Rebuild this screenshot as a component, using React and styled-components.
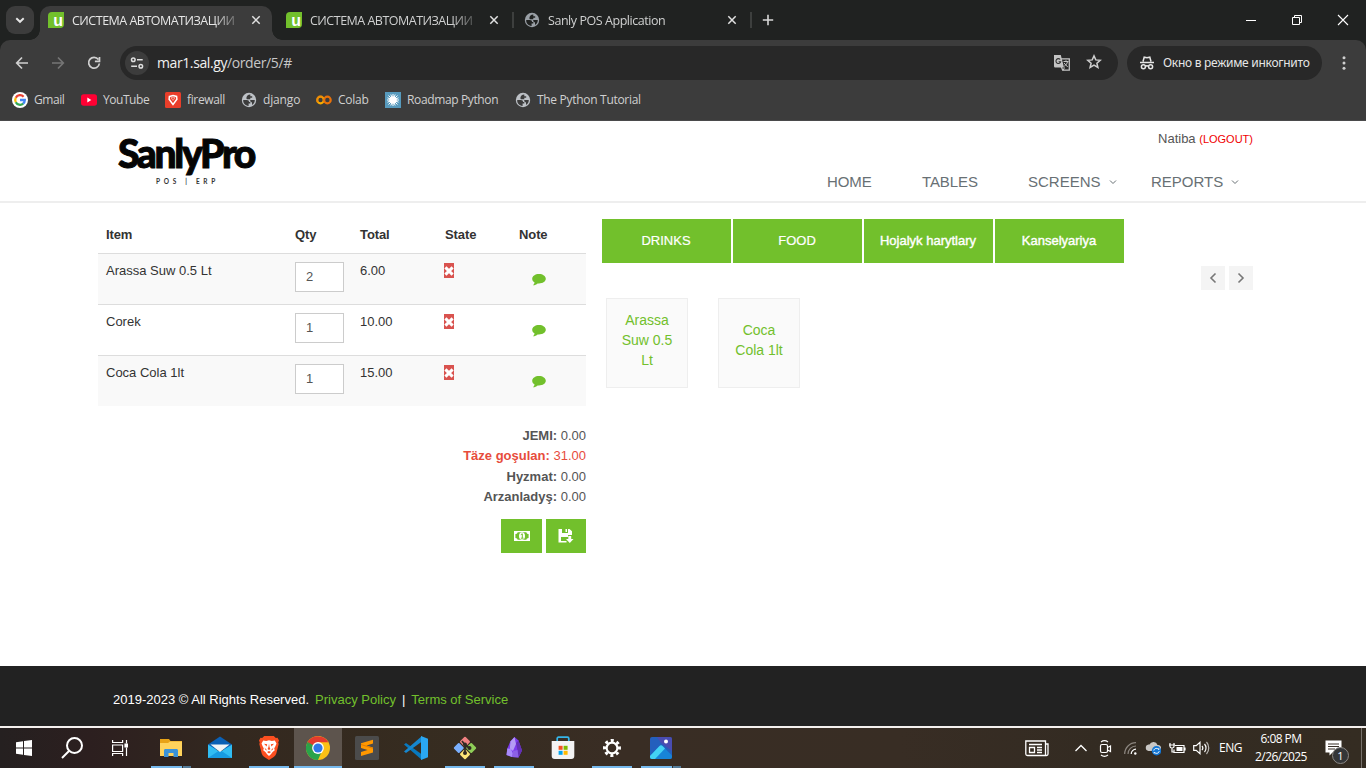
import React from "react";
import styled, { createGlobalStyle } from "styled-components";

const Global = createGlobalStyle`
  * { box-sizing: border-box; }
  body { margin: 0; background: #fff; overflow: hidden; font-family: "Liberation Sans", Arial, sans-serif; }
  svg { display: block; flex: none; }
  a { text-decoration: none; color: inherit; }
`;

const Screen = styled.div`
  width: 1366px;
  height: 768px;
  display: flex;
  flex-direction: column;
  overflow: hidden;
`;

/* ---------- browser ---------- */
const ui = `"Open Sans", "Noto Sans", sans-serif`;

const TabStrip = styled.div`
  height: 40px;
  flex: none;
  background: #202221;
  display: flex;
  align-items: flex-end;
  padding-left: 6px;
  color: #e3e3e3;
`;
const TabSearch = styled.div`
  width: 28px;
  height: 28px;
  border-radius: 9px;
  background: #3c3c3c;
  margin: 0 6px 6px 0;
  display: grid;
  place-items: center;
`;
const Tab = styled.div`
  position: relative;
  width: 232px;
  height: 34px;
  margin-right: 6px;
  padding: 0 9px 6px 8px;
  display: flex;
  align-items: center;
  border-radius: 10px 10px 0 0;
  background: ${(p) => (p.$active ? "#3c3c3c" : "transparent")};
  color: ${(p) => (p.$active ? "#e6e6e6" : "#cfd0d0")};
  &::before, &::after {
    content: "";
    display: ${(p) => (p.$active ? "block" : "none")};
    position: absolute;
    bottom: 0;
    width: 10px;
    height: 10px;
  }
  &::before { left: -10px; background: radial-gradient(circle at 0 0, transparent 9.5px, #3c3c3c 10px); }
  &::after { right: -10px; background: radial-gradient(circle at 100% 0, transparent 9.5px, #3c3c3c 10px); }
`;
const TabTitle = styled.span`
  font: 12.5px/20px ${ui};
  letter-spacing: ${(p) => p.$ls || 0}px;
  width: 166px;
  margin: 1px 11px 0 8px;
  white-space: nowrap;
  -webkit-mask-image: linear-gradient(90deg, #000 142px, rgba(0, 0, 0, 0.2) 166px);
`;
const TabDivider = styled.i`
  width: 2px;
  height: 16px;
  background: #3d3f3e;
  margin: 0 2px 12px -4px;
`;
const NewTab = styled.div`
  width: 28px;
  height: 28px;
  margin: 0 0 6px 0;
  display: grid;
  place-items: center;
`;
const WindowButtons = styled.div`
  margin-left: auto;
  height: 40px;
  display: flex;
  svg { width: 46px; height: 40px; }
`;
const Favicon = styled.span`
  width: 16px;
  height: 16px;
  flex: none;
  background: #72c02c;
  border-radius: 4px 0 4px 0;
  color: #fff;
  font: bold 16px/17px "Liberation Sans", sans-serif;
  text-align: right;
  padding-right: 1px;
`;
const Chrome = styled.div`
  height: 81px;
  flex: none;
  background: #202221;
`;
const ChromeInner = styled.div`
  height: 81px;
  background: #3c3c3c;
  border-radius: 10px 10px 0 0;
  border-bottom: 1px solid #4a4a4b;
`;
const Toolbar = styled.div`
  height: 46px;
  display: flex;
  align-items: center;
  padding: 0 14px 0 10px;
`;
const NavIcons = styled.div`
  display: flex;
  gap: 12px;
  width: 110px;
`;
const Address = styled.div`
  width: 998px;
  height: 34px;
  border-radius: 17px;
  background: #282828;
  display: flex;
  align-items: center;
  padding: 0 16px 0 5px;
`;
const SiteInfo = styled.div`
  width: 24px;
  height: 24px;
  border-radius: 50%;
  background: #3c3c3c;
  display: grid;
  place-items: center;
`;
const Url = styled.span`
  flex: 1;
  margin-left: 8px;
  font: 14px/20px ${ui};
  letter-spacing: -0.4px;
  color: #c7c7c7;
  b { font-weight: 400; color: #f1f1f1; }
`;
const AddressIcons = styled.div`
  display: flex;
  gap: 15px;
`;
const Incognito = styled.div`
  width: 195px;
  height: 34px;
  margin-left: 9px;
  border-radius: 17px;
  background: #282828;
  display: flex;
  align-items: center;
  gap: 8px;
  padding-left: 12px;
  color: #e6e6e6;
  font: 12px/18px "Noto Sans", sans-serif;
  white-space: nowrap;
  letter-spacing: -0.28px;
`;
const Menu = styled.div`
  margin-left: 14px;
`;
const Bookmarks = styled.div`
  height: 28px;
  display: flex;
  align-items: center;
  padding-left: 12px;
`;
const Bookmark = styled.div`
  width: ${(p) => p.$w}px;
  display: flex;
  align-items: center;
  gap: 6px;
  color: #d0d0d0;
  font: 12px/18px ${ui};
  letter-spacing: ${(p) => p.$ls || 0}px;
  white-space: nowrap;
`;

/* ---------- web page ---------- */
const Header = styled.header`
  height: 82px;
  flex: none;
  border-bottom: 2px solid #eee;
  padding: 0 113px 0 98px;
  display: flex;
  justify-content: space-between;
`;
const Brand = styled.div`
  width: 176px;
  padding-top: 10px;
  display: flex;
  flex-direction: column;
  align-items: center;
  color: #050505;
`;
const BrandName = styled.div`
  font: 900 39px/44px Lato, sans-serif;
  letter-spacing: -2.3px;
  -webkit-text-stroke: 1px #050505;
  white-space: nowrap;
`;
const BrandSub = styled.div`
  font: 700 6.5px/8px Lato, sans-serif;
  letter-spacing: 3.7px;
  margin-top: 3px;
  padding-left: 3px;
  color: #333;
  white-space: pre;
`;
const HeaderRight = styled.div`
  display: flex;
  flex-direction: column;
  align-items: flex-end;
  padding-top: 9px;
`;
const User = styled.div`
  font-size: 13px;
  line-height: 18px;
  color: #555;
  a { color: #f00000; font-size: 11px; }
`;
const Nav = styled.nav`
  display: flex;
  margin-top: 24px;
`;
const NavItem = styled.a`
  width: ${(p) => p.$w}px;
  display: flex;
  align-items: center;
  gap: 8px;
  color: #687074;
  font-size: 15px;
  line-height: 20px;
  letter-spacing: ${(p) => p.$ls || 0}px;
`;
const Main = styled.main`
  flex: 1;
  display: flex;
  align-items: flex-start;
  padding: 16px 113px 0 98px;
`;
const Order = styled.section`
  width: 488px;
  color: #555;
  font-size: 13px;
`;
const TableRow = styled.div`
  display: grid;
  grid-template-columns: 189px 65px 85px 74px 75px;
  height: ${(p) => (p.$head ? 34 : 51)}px;
  padding-left: 8px;
  padding-top: ${(p) => (p.$head ? 7 : 8)}px;
  font-weight: ${(p) => (p.$head ? 700 : 400)};
  letter-spacing: ${(p) => (p.$head ? -0.1 : 0)}px;
  line-height: 18px;
  color: #333;
  background: ${(p) => (p.$striped ? "#f9f9f9" : "#fff")};
  border-top: ${(p) => (p.$head ? 0 : 1)}px solid #ddd;
`;
const Qty = styled.div`
  width: 49px;
  height: 30px;
  border: 1px solid #ccc;
  background: #fff;
  padding-left: 10px;
  line-height: 28px;
  color: #555;
`;
const State = styled.div`
  width: 10px;
  height: 15px;
  margin: 1px 0 0 -1px;
  background: #d9534f;
  display: grid;
  place-items: center;
`;
const Note = styled.div`
  padding: 11px 0 0 13px;
`;
const Totals = styled.div`
  padding-top: 19.6px;
  text-align: right;
`;
const Total = styled.div`
  line-height: 20.6px;
  color: ${(p) => (p.$accent ? "#e74c3c" : "#555")};
`;
const Actions = styled.div`
  display: flex;
  justify-content: flex-end;
  gap: 4px;
  margin-top: 11px;
`;
const Action = styled.button`
  width: ${(p) => p.$w}px;
  height: 34px;
  border: 0;
  padding: 0;
  background: #72c02c;
  display: grid;
  place-items: center;
`;
const Catalog = styled.section`
  margin-left: 16px;
  width: 651px;
`;
const Categories = styled.div`
  display: flex;
  gap: 2px;
`;
const Category = styled.button`
  width: 129px;
  height: 44px;
  border: 0;
  padding: 0 1px 1px 0;
  background: #72c02c;
  color: #fff;
  font: 13px "Liberation Sans", Arial, sans-serif;
  -webkit-text-stroke: ${(p) => (p.$strong ? 0.4 : 0.2)}px #fff;
`;
const Pager = styled.div`
  display: flex;
  justify-content: flex-end;
  gap: 4px;
  margin-top: 3px;
`;
const PagerButton = styled.button`
  width: 24px;
  height: 24px;
  border: 0;
  padding: 0;
  background: #f4f4f4;
  display: grid;
  place-items: center;
`;
const Products = styled.div`
  display: flex;
  gap: 30px;
  padding: 8px 0 0 4px;
`;
const Product = styled.div`
  width: 82px;
  height: 90px;
  padding: 0 10px 6px;
  border: 1px solid #eee;
  background: #fafafa;
  color: #72c02c;
  font-size: 14px;
  line-height: 20px;
  text-align: center;
  display: grid;
  place-items: center;
`;
const Footer = styled.footer`
  height: 60px;
  flex: none;
  background: #222;
  color: #fff;
  padding: 25px 0 0 113px;
  font-size: 13px;
  line-height: 18px;
  display: flex;
`;
const FooterLinks = styled.span`
  margin-left: 6px;
  a { color: #72c02c; }
`;
const FooterBar = styled.span`
  margin: 0 6px;
`;

/* ---------- taskbar ---------- */
const Taskbar = styled.div`
  height: 42px;
  flex: none;
  border-top: 2px solid #f4f0ee;
  background: linear-gradient(90deg, #252020 0, #2c1f1f 90px, #33281f 230px, #362c20 420px, #392d24 620px, #382d24 900px, #332b22 1100px, #342c22 1366px);
  display: flex;
  color: #fff;
`;
const Launch = styled.div`
  width: 49px;
  flex: none;
  height: 40px;
  display: grid;
  place-items: center;
  grid-template-rows: 38px 2px;
  padding-right: 1px;
  svg { margin-top: 2px; }
`;
const SysLaunch = styled(Launch)`
  width: 48px;
  padding: 0;
`;
const LaunchActive = styled(Launch)`
  background: linear-gradient(90deg, #5d544d 48px, transparent 48px);
`;
const LaunchGap = styled.i`
  width: 3px;
`;
const Running = styled.i`
  width: ${(p) => p.$w || 40}px;
  height: 2px;
  background: ${(p) => (p.$stack ? "linear-gradient(90deg, #76b9ed 31px, #36322e 31px, #36322e 32px, #557c99 32px)" : "#76b9ed")};
`;
const Tray = styled.div`
  margin-left: auto;
  display: flex;
  align-items: center;
  height: 40px;
`;
const Slot = styled.div`
  width: ${(p) => p.$w}px;
`;
const Lang = styled.div`
  width: 32px;
  font: 12px/18px ${ui};
  letter-spacing: -0.45px;
`;
const Clock = styled.div`
  width: 60px;
  text-align: center;
  font: 12px/18px ${ui};
  letter-spacing: -0.55px;
`;
const Notice = styled.div`
  position: relative;
  width: 50px;
  height: 40px;
  padding: 12px 0 0 14px;
`;
const NoticeCount = styled.span`
  position: absolute;
  left: 21px;
  top: 19px;
  width: 17px;
  height: 17px;
  border: 1px solid #8b8885;
  border-radius: 50%;
  background: #343638;
  font: 11px/15px ${ui};
  text-align: center;
`;
const Edge = styled.i`
  width: 5px;
  height: 40px;
  border-left: 1px solid #77716b;
`;

/* ---------- icons ---------- */
const Svg = ({ w = 16, h = w, vb, children, ...r }) => (
  <svg width={w} height={h} viewBox={vb || `0 0 ${w} ${h}`} fill="none" {...r}>{children}</svg>
);
const Close = () => (
  <Svg w={14} stroke="#e1e1e1" strokeWidth="1.5"><path d="M3.3 3.3l7.4 7.4M10.7 3.3l-7.4 7.4" /></Svg>
);
const Globe = ({ c = "#bdc1c6", bg = "#3c3c3c" }) => (
  <Svg w={16}>
    <circle cx="8" cy="8" r="7.2" fill={c} />
    <path d="M2.2 8h3.600c1.600 0 2.200.7 2.200 1.900h1.300v1.700H7.600v2.300c-3.500-.2-5.600-2.800-5.400-5.900z" fill={bg} />
    <path d="M9.300 2.400v1.900h1.900v1.500H9.300v1.400H6.700c-.9 0-1.300-.5-1.300-1.300 0-2 1.600-3.300 3.900-3.500z" fill={bg} />
    <path d="M9.200 7.900h4.600c0 2.300-1 4-2.800 5v-2.600c-1.200 0-1.800-.9-1.800-2.400z" fill={bg} />
  </Svg>
);
const Google = () => (
  <Svg w={16} vb="0 0 16 16">
    <circle cx="8" cy="8" r="8" fill="#fff" />
    <g strokeWidth="2.3">
      <path d="M11.6 4.7A4.8 4.8 0 0 0 3.8 5.8" stroke="#ea4335" />
      <path d="M3.8 5.7a4.8 4.8 0 0 0 0 4.6" stroke="#fbbc05" />
      <path d="M3.8 10.2a4.8 4.8 0 0 0 7.4 1.4" stroke="#34a853" />
      <path d="M8 8h4.8c0 1.5-.6 2.8-1.7 3.7" stroke="#4285f4" />
    </g>
  </Svg>
);
const Brave = ({ w = 20, h = 24 }) => (
  <Svg w={w} h={h} vb="0 0 20 24">
    <path d="M5.2 0h9.6l2 2 1.7-.2L20 4.4l-.8 2.2.5 1.5-2.4 9.3c-.5 1.6-1.4 2.6-2.6 3.5L10 24l-4.7-3.1c-1.2-.9-2.1-1.9-2.6-3.5L.3 8.1l.5-1.5L0 4.4l1.5-2.6 1.7.2z" fill="#fb4f20" />
    <path d="M4.2 4.4l3 .5 2.8-.6 2.8.6 3-.5 1.7 3-1 2.5-1.3 2.5.6 1.9-2.2 1.7-1.7 2.3L10 20l-1.9-1.7L6.4 16l-2.2-1.7.6-1.9L3.5 9.9l-1-2.5z" fill="#fff" />
    <path d="M5 7.7l3.2.5-.6 2.2zM15 7.7l-3.2.5.6 2.2zM10 7.5l.5 3.6.9 2L10 14l-1.4-.9.9-2zM5.500 11.500l2.800 3-1.800-.6zM14.500 11.500l-2.800 3 1.800-.6zM8 16l2-1 2 1-2 1.400z" fill="#fb4f20" />
  </Svg>
);
const StoreIcon = () => (
  <Svg w={24}>
    <path d="M6.2 6V2.500c0-.8.5-1.300 1.300-1.300h9c.8 0 1.300.5 1.300 1.300V6" stroke="#35b5e9" strokeWidth="1.7" />
    <path d="M.7 5h22.600v15a3 3 0 0 1-3 3H3.700a3 3 0 0 1-3-3z" fill="#f3f3f4" />
    <path fill="#f25022" d="M7.600 9.800h4v4h-4z" /><path fill="#7fba00" d="M12.600 9.800h4v4h-4z" />
    <path fill="#00a4ef" d="M7.600 14.800h4v4h-4z" /><path fill="#ffb900" d="M12.600 14.800h4v4h-4z" />
  </Svg>
);

const rows = [
  ["Arassa Suw 0.5 Lt", 2, "6.00"],
  ["Corek", 1, "10.00"],
  ["Coca Cola 1lt", 1, "15.00"],
];
const tabTitle = "СИСТЕМА АВТОМАТИЗАЦИИ";

export default function App() {
  return (
    <Screen>
      <Global />
      <TabStrip>
        <TabSearch><Svg w={12} stroke="#e6e6e6" strokeWidth="1.9"><path d="M2.3 4.2L6 7.8l3.7-3.6" /></Svg></TabSearch>
        <Tab $active><Favicon>u</Favicon><TabTitle $ls={-0.5}>{tabTitle}</TabTitle><Close /></Tab>
        <Tab><Favicon>u</Favicon><TabTitle $ls={-0.5}>{tabTitle}</TabTitle><Close /></Tab>
        <TabDivider />
        <Tab><Globe c="#9aa0a6" bg="#202221" /><TabTitle $ls={-0.45}>Sanly POS Application</TabTitle><Close /></Tab>
        <TabDivider />
        <NewTab><Svg w={14} stroke="#d8d8d8" strokeWidth="1.6"><path d="M7 1.8v10.400M1.800 7h10.400" /></Svg></NewTab>
        <WindowButtons>
          <Svg w={46} h={40} stroke="#fff"><path d="M18 20.5h10" /></Svg>
          <Svg w={46} h={40} stroke="#fff"><path d="M18.5 17.5h7v7h-7zM20.5 17.5v-2h7v7h-2" /></Svg>
          <Svg w={46} h={40} stroke="#fff" strokeWidth="1.1"><path d="M18 15l10 10M28 15L18 25" /></Svg>
        </WindowButtons>
      </TabStrip>

      <Chrome>
        <ChromeInner>
          <Toolbar>
            <NavIcons>
              <Svg w={24} stroke="#d0d0d0" strokeWidth="1.7"><path d="M18 12H7M12 6.5L6.7 12l5.3 5.5" /></Svg>
              <Svg w={24} stroke="#757575" strokeWidth="1.7"><path d="M6 12h11M12 6.5l5.3 5.5-5.3 5.5" /></Svg>
              <Svg w={24} stroke="#d0d0d0" strokeWidth="1.7"><path d="M16.4 8.5A5.4 5.4 0 1 0 17.4 12.5M17.5 6v4.4h-4.6" /></Svg>
            </NavIcons>
            <Address>
              <SiteInfo>
                <Svg w={14} stroke="#dedede" strokeWidth="1.5"><circle cx="3.3" cy="3.7" r="1.8" /><path d="M7 3.7h5.7M1.2 10.3H7" /><circle cx="10.8" cy="10.3" r="1.8" /></Svg>
              </SiteInfo>
              <Url><b>mar1.sal.gy</b>/order/5/#</Url>
              <AddressIcons>
                <Svg w={18}>
                  <path d="M8 4.8h8.3v11.4H9.7L8 12" stroke="#c4c4c4" strokeWidth="1.3" />
                  <path d="M1 1h6.8l3.2 12.5H2.2A1.2 1.2 0 0 1 1 12.3z" fill="#c4c4c4" />
                  <path d="M7.2 5.5a2.4 2.4 0 1 0 .5 2.2H5.6" stroke="#333" strokeWidth="1.1" />
                  <path d="M10.5 7.5h5M13 6.3v1.2M14.5 7.7c-.4 2-1.6 3.4-3.2 4.5M11 9l3.7 4M10 16.5l1.5-3" stroke="#c4c4c4" />
                </Svg>
                <Svg w={16} stroke="#cecece" strokeWidth="1.5"><path d="M8 1.9l1.8 4 4.4.4-3.3 2.9 1 4.3L8 11.2l-3.9 2.3 1-4.3-3.3-2.9 4.400-.4z" /></Svg>
              </AddressIcons>
            </Address>
            <Incognito>
              <Svg w={16} stroke="#e6e6e6" strokeWidth="1.5">
                <path d="M4 6.500l1.200-4.300 2.800.5 2.800-.5L12 6.500M1 7.600h14" /><circle cx="4.400" cy="11.700" r="2" /><circle cx="11.600" cy="11.700" r="2" /><path d="M6.400 11.400c1-.7 2.200-.7 3.200 0" />
              </Svg>
              Окно в режиме инкогнито
            </Incognito>
            <Menu><Svg w={16}><g fill="#d0d0d0"><circle cx="8" cy="2.8" r="1.5" /><circle cx="8" cy="8" r="1.5" /><circle cx="8" cy="13.2" r="1.5" /></g></Svg></Menu>
          </Toolbar>
          <Bookmarks>
            <Bookmark $w={69} $ls={-0.45}><Google />Gmail</Bookmark>
            <Bookmark $w={84} $ls={-0.45}>
              <Svg w={16}><rect y="2.3" width="16" height="11.4" rx="2.7" fill="#f03" /><path d="M6.3 5.6v4.8l4-2.4z" fill="#fff" /></Svg>YouTube
            </Bookmark>
            <Bookmark $w={76} $ls={-0.35}>
              <Svg w={16}><rect width="16" height="16" rx="1.5" fill="#e93e2a" /><path d="M4.4 4.4l3.6-.8 3.6.8.3 2.8L8 12.5 4.100 7.200z" stroke="#fff" strokeWidth="1.5" /><path d="M6 5.700h4L8 8.400z" stroke="#fff" strokeWidth=".5" /></Svg>firewall
            </Bookmark>
            <Bookmark $w={75} $ls={-0.15}><Globe />django</Bookmark>
            <Bookmark $w={69} $ls={-0.25}>
              <Svg w={16}><circle cx="4.5" cy="8" r="3.3" stroke="#f9ab00" strokeWidth="2.2" /><circle cx="11.4" cy="8" r="3.3" stroke="#e8710a" strokeWidth="2.2" /><path d="M6.7 5.500a3.300 3.300 0 0 0-4.600 4.800" stroke="#e8710a" strokeWidth="2.2" opacity=".5" /></Svg>Colab
            </Bookmark>
            <Bookmark $w={130} $ls={-0.37}>
              <Svg w={16}><rect width="16" height="16" fill="#579abd" /><circle cx="8" cy="8" r="3.8" fill="#fff" /><path d="M8 2v12M2 8h12M3.500 3.500l9 9M12.500 3.500l-9 9M2.500 5.800l11 4.400M5.800 2.500l4.400 11M2.500 10.200l11-4.400M10.200 2.500L5.800 13.500" stroke="#fff" /></Svg>Roadmap Python
            </Bookmark>
            <Bookmark $w={140} $ls={-0.3}><Globe />The Python Tutorial</Bookmark>
          </Bookmarks>
        </ChromeInner>
      </Chrome>

      <Header>
        <Brand>
          <BrandName>SanlyPro</BrandName>
          <BrandSub>POS | ERP</BrandSub>
        </Brand>
        <HeaderRight>
          <User>Natiba <a>(LOGOUT)</a></User>
          <Nav>
            <NavItem $w={95} $ls={-0.1}>HOME</NavItem>
            <NavItem $w={106} $ls={-0.1}>TABLES</NavItem>
            <NavItem $w={123}>SCREENS<Svg w={8} stroke="#687074"><path d="M1 2.5l3 3 3-3" /></Svg></NavItem>
            <NavItem $w={102}>REPORTS<Svg w={8} stroke="#687074"><path d="M1 2.5l3 3 3-3" /></Svg></NavItem>
          </Nav>
        </HeaderRight>
      </Header>

      <Main>
        <Order>
          <TableRow $head><span>Item</span><span>Qty</span><span>Total</span><span>State</span><span>Note</span></TableRow>
          {rows.map(([name, qty, total], i) => (
            <TableRow key={name} $striped={i % 2 === 0}>
              <span>{name}</span>
              <Qty>{qty}</Qty>
              <span>{total}</span>
              <State><Svg w={10} stroke="#fff" strokeWidth="3"><path d="M1.4 1.4l7.2 7.2M8.6 1.4L1.4 8.6" /></Svg></State>
              <Note><Svg w={14} h={13}><path d="M7 1C3.2 1 .2 3.1.2 5.8c0 1.6 1 2.9 2.4 3.8-.2 1.1-.8 1.9-1.6 2.7 1.9-.2 3.5-.9 4.6-1.9 4.6.5 8.2-1.7 8.2-4.6C13.8 3.1 10.8 1 7 1z" fill="#72c02c" /></Svg></Note>
            </TableRow>
          ))}
          <Totals>
            <Total><b>JEMI:</b> 0.00</Total>
            <Total $accent><b>Täze goşulan:</b> 31.00</Total>
            <Total><b>Hyzmat:</b> 0.00</Total>
            <Total><b>Arzanladyş:</b> 0.00</Total>
          </Totals>
          <Actions>
            <Action $w={41}>
              <Svg w={16} h={10}><path d="M0 0h16v10H0z" fill="#fff" /><path d="M3.6 1.2h8.800c0 1 1 1.800 2.200 1.800v4c-1.200 0-2.200.8-2.200 1.800H3.600c0-1-1-1.800-2.200-1.800V3c1.200 0 2.200-.8 2.200-1.800z" fill="#72c02c" /><ellipse cx="8" cy="5" rx="3" ry="3.800" fill="#fff" /><path d="M6.800 3.700l1.500-.9v4.300M6.800 7.200h2.800" stroke="#72c02c" /></Svg>
            </Action>
            <Action $w={40}>
              <Svg w={16}><path d="M.5 1H4v4h6V1h1.500L14 3.300V7H10v2H3v5.500H.5z" fill="#fff" /><path d="M7.500 1H9v3H7.500z" fill="#fff" /><path d="M3 13h5.500v1.500H3z" fill="#fff" /><path d="M10.300 8h2.900v3h2.300l-3.700 4-3.800-4h2.300z" fill="#fff" /></Svg>
            </Action>
          </Actions>
        </Order>
        <Catalog>
          <Categories>
            <Category>DRINKS</Category>
            <Category>FOOD</Category>
            <Category $strong>Hojalyk harytlary</Category>
            <Category $strong>Kanselyariya</Category>
          </Categories>
          <Pager>
            <PagerButton><Svg w={10} h={12} stroke="#777" strokeWidth="1.6"><path d="M7.500 1.500L3 6l4.500 4.500" /></Svg></PagerButton>
            <PagerButton><Svg w={10} h={12} stroke="#777" strokeWidth="1.6"><path d="M2.500 1.500L7 6l-4.500 4.500" /></Svg></PagerButton>
          </Pager>
          <Products>
            <Product>Arassa Suw 0.5 Lt</Product>
            <Product>Coca Cola 1lt</Product>
          </Products>
        </Catalog>
      </Main>

      <Footer>
        <span>2019-2023 © All Rights Reserved.</span>
        <FooterLinks><a>Privacy Policy</a><FooterBar>|</FooterBar><a>Terms of Service</a></FooterLinks>
      </Footer>

      <Taskbar>
        <SysLaunch><Svg w={16}><path d="M0 2.200l7-1v6.300H0zM8 1.100L16 0v7.500H8zM0 8.500h7v6.300l-7-1zM8 8.500h8V16l-8-1.100z" fill="#fff" /></Svg></SysLaunch>
        <SysLaunch><Svg w={24} stroke="#fff" strokeWidth="2"><circle cx="14.500" cy="9.500" r="7.500" /><path d="M9 15l-7 7" /></Svg></SysLaunch>
        <SysLaunch><Svg w={16} stroke="#fff" strokeWidth="1.200"><path d="M.6 0v2.500h10V0M.6 5h10v6.500H.6zM.6 16v-2.500h10V16M14.500 0v3.500M14.500 7.500V16" /><path d="M13 4h3v3h-3z" fill="#fff" /></Svg></SysLaunch>
        <LaunchGap />
        <Launch>
          <Svg w={24}><path d="M1 3h9l1.500 2H23v15H1z" fill="#e8a317" /><path d="M1 7h8l2-1.500h12V20H1z" fill="#ffd35c" /><path d="M5 21v-6.500c0-1 .7-1.500 1.500-1.500h11c.8 0 1.500.5 1.500 1.500V21h-4.500v-4h-5v4z" fill="#3b93d9" /></Svg>
          <Running $stack />
        </Launch>
        <Launch><Svg w={24}><path d="M0 8.500L12 .5l12 8-3 5H3z" fill="#0b60b5" /><path d="M0 8.500l12 7.500 12-7.500V22H0z" fill="#31bdf3" /><path d="M0 22l12-8 12 8z" fill="#179be2" /><path d="M2.500 8.500h19L12 16z" fill="#f2f4f6" /></Svg></Launch>
        <Launch><Brave /><Running /></Launch>
        <LaunchActive>
          <Svg w={24}><circle cx="12" cy="12" r="12" fill="#fbc116" /><path d="M12 12h5.200L12 24A12 12 0 0 1 1.600 6z" fill="#29a34a" /><path d="M1.600 6A12 12 0 0 1 22.400 6.300H12L6.800 15z" fill="#e33b2e" /><path d="M1.600 6l5.200 9L12 12z" fill="#29a34a" /><circle cx="12" cy="12" r="5.900" fill="#fff" /><circle cx="12" cy="12" r="4.600" fill="#2f78e8" /></Svg>
          <Running $w={48} />
        </LaunchActive>
        <Launch><Svg w={24}><rect width="24" height="24" rx="1.500" fill="#4b4b4b" /><path d="M6 7.200l12-3.400v3.800l-6.500 2 6.500 2v4.800L6 20v-3.900l6.600-2L6 12z" fill="#ff9800" /><path d="M6 8.500l12 3.800" stroke="#e07c00" /></Svg></Launch>
        <Launch><Svg w={24}><path d="M0 8.500l2-1.500L18 18.500V24z" fill="#0879bf" /><path d="M0 15.500L2 17 18 5.500V0z" fill="#1687cf" /><path d="M17 0l7 2.800v18.400L17 24z" fill="#2aa7f2" /></Svg></Launch>
        <Launch>
          <Svg w={24}><g transform="rotate(45 12 12)"><rect x="3.800" y="3.800" width="7.600" height="7.600" rx="1" fill="#f08080" /><rect x="12.600" y="3.800" width="7.600" height="7.600" rx="1" fill="#8fce58" /><rect x="3.800" y="12.600" width="7.600" height="7.600" rx="1" fill="#7bb0ff" /><rect x="12.600" y="12.600" width="7.600" height="7.600" rx="1" fill="#ffe678" /></g><path d="M9 5l3 4v9M12 9l5 3.500" stroke="#302922" strokeWidth="1.700" /><g fill="#302922"><circle cx="12" cy="8.500" r="2" /><circle cx="12" cy="17" r="2" /><circle cx="16.500" cy="12" r="2" /></g></Svg>
          <Running />
        </Launch>
        <Launch>
          <Svg w={24}><path d="M12.500 1l4 3.500 3.500 10-3.500 7L10 21l-5.500-2 .8-6.500L8.500 5z" fill="#7c3aed" /><path d="M12.500 1l-4 4.500-.7 7L11 15l3-7z" fill="#b49bf4" /><path d="M5.300 12.500L9 13l2 5-1 3-5.500-2z" fill="#a88bfa" /><path d="M14 7l2.500-2.500 3.500 10-3.500 7-1-7z" fill="#6330b5" /><path d="M11 15l4.500-1 1 7.500-6.500-.5z" fill="#8c60e5" /></Svg>
          <Running />
        </Launch>
        <Launch><StoreIcon /></Launch>
        <Launch>
          <Svg w={20} stroke="#fff"><circle cx="10" cy="10" r="5.400" strokeWidth="2.200" /><circle cx="10" cy="10" r="7.500" strokeWidth="3" strokeDasharray="2.950 2.940" transform="rotate(-11 10 10)" /></Svg>
          <Running />
        </Launch>
        <Launch>
          <Svg w={24}><rect x="1" y="1" width="22" height="22" rx="2" fill="#245fbd" /><path d="M8 1h13a2 2 0 0 1 2 2v12L12 7z" fill="#5a45ad" opacity=".7" /><path d="M1 20L10.500 10c1-1 2-1 3 0L23 19.500V21a2 2 0 0 1-2 2H3a2 2 0 0 1-2-2z" fill="#1784d8" /><path d="M1 20l9.500-10c1-1 2-1 3 0l2.500 2.500L6 23H3a2 2 0 0 1-2-2z" fill="#43d2f5" /><circle cx="17" cy="5.500" r="2" fill="#fff" /></Svg>
          <Running $stack />
        </Launch>
        <Tray>
          <Slot $w={50}><Svg w={24} h={17} stroke="#fff" strokeWidth="1.300"><path d="M.8 1h19.700v14.500H2.500C1.500 15.500.8 15 .8 14zM20.500 4H23v10c0 1-.7 1.500-1.500 1.500H19M4 4.500h13M12 7.500h5M12 10h5M12 12.500h5M4.500 7.500h5v5h-5z" /></Svg></Slot>
          <Slot $w={24}><Svg w={12} h={8} stroke="#fff" strokeWidth="1.300"><path d="M.5 7L6 1.500 11.500 7" /></Svg></Slot>
          <Slot $w={25}><Svg w={13} h={17} stroke="#fff" strokeWidth="1.200"><rect x="1.500" y="4.500" width="7" height="8" rx="1.500" /><path d="M8.500 7.500l3-1.500v5.500l-3-1.500M2 2c2-1.500 5-1.500 7 0M2 15c2 1.500 5 1.500 7 0" /></Svg></Slot>
          <Slot $w={21}><Svg w={13} h={13} stroke="#aaa49f" strokeWidth="1.200"><path d="M.7 12A11.300 11.300 0 0 1 12 .7M4 12a8 8 0 0 1 8-8" opacity=".75" /><path d="M7.200 12A4.800 4.800 0 0 1 12 7.200" stroke="#fff" /><circle cx="11.300" cy="11.500" r="1.200" fill="#fff" stroke="none" /></Svg></Slot>
          <Slot $w={24}><Svg w={16} h={15}><path d="M3.500 10a3.300 3.300 0 0 1 0-6.500h1A4.300 4.300 0 0 1 12.500 4a3.200 3.200 0 0 1 2 6z" fill="#c9c7c5" /><circle cx="11.500" cy="9.800" r="4.700" fill="#1276d5" /><path d="M8.800 9.500c.5-2.500 3.800-2.800 5-.8v-1.500M14.200 10.200c-.5 2.500-3.800 2.800-5 .8v1.500" stroke="#fff" /></Svg></Slot>
          <Slot $w={24}><Svg w={17} h={13} stroke="#fff" strokeWidth="1.200"><path d="M1 1v3.500c0 2 4 2 4 0V1M0 3h6M3 6v4h2M6 3.500h9v7H5v-3M16 5.500v3" /><path d="M7.500 5h6v4h-6z" fill="#fff" stroke="none" /></Svg></Slot>
          <Slot $w={26}><Svg w={17} h={14} stroke="#fff" strokeWidth="1.200"><path d="M.7 4.700h2.500L7 1.300v11.400L3.200 9.300H.7zM9 5c1 1.200 1 2.800 0 4M11.500 3c2 2.200 2 5.800 0 8" /><path d="M13.500 1c3 3.300 3 8.700 0 12" opacity=".65" /></Svg></Slot>
          <Lang>ENG</Lang>
          <Clock>6:08 PM<br />2/26/2025</Clock>
          <Notice>
            <Svg w={17} h={17}><path d="M.5.500h16v12h-9l-3 3v-3h-4z" fill="#fff" /><path d="M3 4h11M3 6.500h11M3 9h7" stroke="#3a3128" /></Svg>
            <NoticeCount>1</NoticeCount>
          </Notice>
          <Edge />
        </Tray>
      </Taskbar>
    </Screen>
  );
}
